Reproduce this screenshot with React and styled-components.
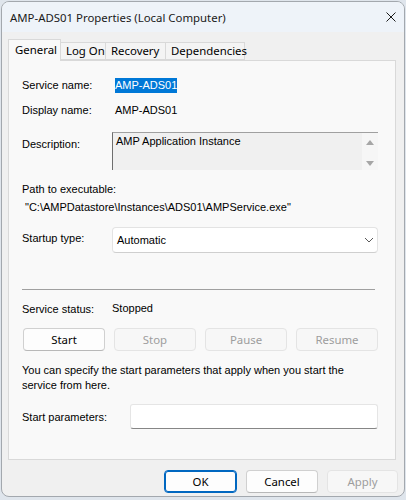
import React from "react";
import styled, { createGlobalStyle } from "styled-components";

const GlobalStyle = createGlobalStyle`
  html, body {
    margin: 0;
    padding: 0;
    background: #dfe5ec;
  }
  * {
    box-sizing: border-box;
  }
`;

const uiFont = `"Segoe UI", "Noto Sans", sans-serif`;
const dlgFont = `"Liberation Sans", Arial, sans-serif`;

const Window = styled.div`
  margin: 1px 0 0 1px;
  width: 404px;
  height: 496px;
  border: 1px solid #a3a8ae;
  border-radius: 8px;
  overflow: hidden;
  background: #f0f0f0;
  display: flex;
  flex-direction: column;
`;

const TitleBar = styled.div`
  height: 30px;
  display: flex;
  align-items: center;
  justify-content: space-between;
  padding: 0 8px 0 8px;
  background: #eef3f9;
  font-family: ${uiFont};
  font-size: 11.4px;
  color: #1a1a1a;
`;

const CloseButton = styled.div`
  width: 10px;
  height: 10px;
  display: flex;
  svg {
    display: block;
  }
`;

const Body = styled.div`
  flex: 1;
  padding: 7px 0 0 6px;
  display: flex;
  flex-direction: column;
`;

const TabStrip = styled.div`
  display: flex;
  align-items: flex-end;
  height: 21px;
`;

const Tab = styled.div`
  position: relative;
  width: ${(p) => p.$w}px;
  height: ${(p) => (p.$active ? 22 : 18)}px;
  margin-bottom: ${(p) => (p.$active ? -1 : 0)}px;
  margin-left: ${(p) => (p.$active ? 0 : -1)}px;
  z-index: ${(p) => (p.$active ? 2 : 1)};
  background: ${(p) => (p.$active ? "#f9f9f9" : "#f4f4f4")};
  border: 1px solid #d9d9d9;
  border-bottom: ${(p) => (p.$active ? "none" : "1px solid #d9d9d9")};
  font-family: ${uiFont};
  font-size: 11.4px;
  color: #000;
  display: flex;
  align-items: ${(p) => (p.$active ? "flex-start" : "center")};
  padding: ${(p) => (p.$active ? "2px 0 0 6px" : "0 0 0 5px")};
  line-height: 16px;
  white-space: nowrap;
`;

const Panel = styled.div`
  width: 388px;
  height: 400px;
  background: #f9f9f9;
  border: 1px solid #d9d9d9;
  padding: 16px 17px 0 13px;
  display: flex;
  flex-direction: column;
  font-family: ${dlgFont};
  font-size: 11px;
  color: #000;
`;

const Row = styled.div`
  display: grid;
  grid-template-columns: ${(p) => p.$label || 90}px 1fr;
  align-items: ${(p) => p.$align || "center"};
  height: ${(p) => p.$h}px;
  margin-top: ${(p) => p.$mt || 0}px;
`;

const Label = styled.div`
  line-height: 14px;
  padding-top: ${(p) => p.$pt || 0}px;
  white-space: nowrap;
`;

const Value = styled.div`
  line-height: 15px;
  padding-left: ${(p) => (p.$flush ? 0 : 3)}px;
  white-space: nowrap;
`;

const Selected = styled.span`
  display: inline-block;
  background: #0078d7;
  color: #fff;
  line-height: 15px;
  height: 15px;
`;

const TextBox = styled.div`
  height: 38px;
  display: flex;
  background: #f0f0f0;
  border-top: 1px solid #a0a0a0;
  border-left: 1px solid #6e6e6e;
`;

const TextArea = styled.div`
  flex: 1;
  padding: 1px 0 0 3px;
  line-height: 14px;
`;

const ScrollBar = styled.div`
  width: 16px;
  background: #f6f6f6;
  display: flex;
  flex-direction: column;
  justify-content: space-between;
  align-items: center;
  padding: 7px 0 4px;
`;

const Arrow = styled.div`
  width: 0;
  height: 0;
  border-left: 4px solid transparent;
  border-right: 4px solid transparent;
  ${(p) =>
    p.$down
      ? "border-top: 5px solid #a6a6a6;"
      : "border-bottom: 5px solid #a6a6a6;"}
`;

const Line = styled.div`
  line-height: 14px;
  height: 14px;
  margin-top: ${(p) => p.$mt || 0}px;
  padding-left: ${(p) => p.$pl || 0}px;
  white-space: nowrap;
`;

const Select = styled.div`
  height: 26px;
  background: #fff;
  border: 1px solid #e3e3e3;
  border-bottom-color: #cfcfcf;
  border-radius: 4px;
  display: flex;
  align-items: center;
  justify-content: space-between;
  padding: 0 3px 0 4px;
  svg {
    display: block;
  }
`;

const Separator = styled.div`
  height: 1px;
  background: #a0a0a0;
  margin: ${(p) => p.$mt}px 3px 0 0;
`;

const ButtonRow = styled.div`
  display: grid;
  grid-template-columns: repeat(4, 1fr);
  column-gap: 9px;
  margin: 13px 0 0 1px;
  height: 23px;
`;

const Button = styled.div`
  height: 23px;
  width: ${(p) => (p.$w ? `${p.$w}px` : "auto")};
  display: flex;
  align-items: center;
  justify-content: center;
  font-family: ${uiFont};
  font-size: 11.4px;
  border-radius: 4px;
  background: ${(p) => (p.$disabled ? "#f7f7f7" : "#fdfdfd")};
  color: ${(p) => (p.$disabled ? "#9d9d9d" : "#000")};
  border: 1px solid
    ${(p) => (p.$primary ? "#0067c0" : p.$disabled ? "#e4e4e4" : "#d0d0d0")};
  border-bottom-color: ${(p) =>
    p.$primary ? "#0067c0" : p.$disabled ? "#e4e4e4" : "#b8b8b8"};
  ${(p) => (p.$primary ? "box-shadow: inset 0 0 0 1px #0067c0;" : "")}
`;

const Paragraph = styled.div`
  margin-top: 12px;
  line-height: 15px;
  white-space: nowrap;
`;

const Input = styled.div`
  height: 25px;
  background: #fff;
  border: 1px solid #e5e5e5;
  border-bottom-color: #868686;
  border-radius: 3px;
`;

const Footer = styled.div`
  display: flex;
  justify-content: flex-end;
  gap: 9px;
  padding: 10px 6px 0 0;
`;

const App = () => {
  return (
    <>
      <GlobalStyle />
      <Window>
        <TitleBar>
          <span>AMP-ADS01 Properties (Local Computer)</span>
          <CloseButton>
            <svg width="10" height="10" viewBox="0 0 10 10">
              <path d="M0.5 0.5 L9.5 9.5 M9.5 0.5 L0.5 9.5" stroke="#1a1a1a" strokeWidth="1" />
            </svg>
          </CloseButton>
        </TitleBar>
        <Body>
          <TabStrip>
            <Tab $active $w={53}>General</Tab>
            <Tab $w={46}>Log On</Tab>
            <Tab $w={61}>Recovery</Tab>
            <Tab $w={80}>Dependencies</Tab>
          </TabStrip>
          <Panel>
            <Row $h={16}>
              <Label>Service name:</Label>
              <Value>
                <Selected>AMP-ADS01</Selected>
              </Value>
            </Row>
            <Row $h={16} $mt={9}>
              <Label>Display name:</Label>
              <Value>AMP-ADS01</Value>
            </Row>
            <Row $h={38} $mt={14} $align="start">
              <Label $pt={5}>Description:</Label>
              <TextBox>
                <TextArea>AMP Application Instance</TextArea>
                <ScrollBar>
                  <Arrow />
                  <Arrow $down />
                </ScrollBar>
              </TextBox>
            </Row>
            <Line $mt={12}>Path to executable:</Line>
            <Line $mt={4} $pl={3}>"C:\AMPDatastore\Instances\ADS01\AMPService.exe"</Line>
            <Row $h={26} $mt={13} $align="start">
              <Label $pt={4}>Startup type:</Label>
              <Select>
                <span>Automatic</span>
                <svg width="10" height="6" viewBox="0 0 10 6">
                  <path d="M1 1 L5 5 L9 1" fill="none" stroke="#5a5a5a" strokeWidth="1" />
                </svg>
              </Select>
            </Row>
            <Separator $mt={36} />
            <Row $h={14} $mt={11}>
              <Label>Service status:</Label>
              <Value $flush>Stopped</Value>
            </Row>
            <ButtonRow>
              <Button>Start</Button>
              <Button $disabled>Stop</Button>
              <Button $disabled>Pause</Button>
              <Button $disabled>Resume</Button>
            </ButtonRow>
            <Paragraph>
              You can specify the start parameters that apply when you start the
              <br />
              service from here.
            </Paragraph>
            <Row $h={25} $mt={11} $label={108}>
              <Label>Start parameters:</Label>
              <Input />
            </Row>
          </Panel>
          <Footer>
            <Button $primary $w={73}>OK</Button>
            <Button $w={72}>Cancel</Button>
            <Button $disabled $w={71}>Apply</Button>
          </Footer>
        </Body>
      </Window>
    </>
  );
};

export default App;
